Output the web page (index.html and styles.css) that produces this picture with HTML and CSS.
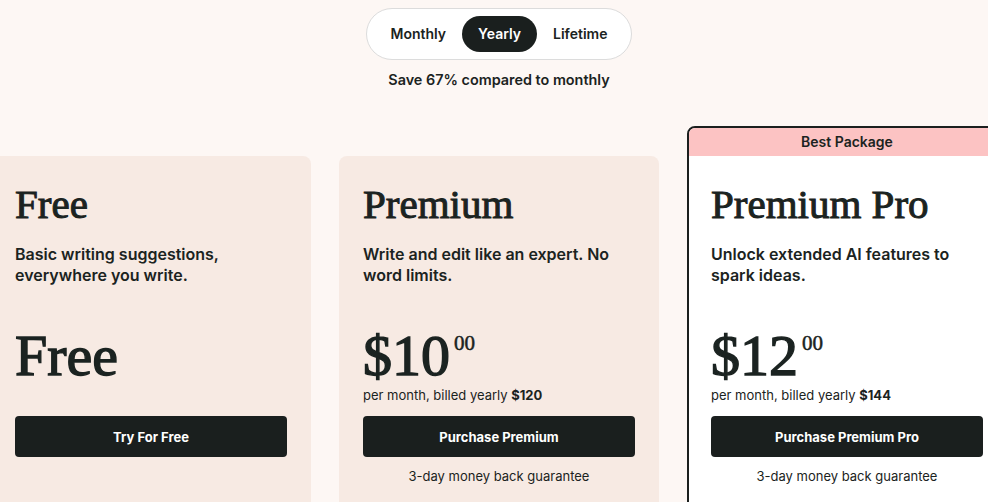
FILE: index.html
```html
<!DOCTYPE html>
<html lang="en">
<head>
  <meta charset="UTF-8">
  <title>Pricing</title>
  <link rel="stylesheet" href="styles.css">
</head>
<body>
  <div class="page">
    <div class="billing">
      <div class="toggle">
        <span class="opt">Monthly</span>
        <span class="opt active">Yearly</span>
        <span class="opt">Lifetime</span>
      </div>
      <p class="save">Save 67% compared to monthly</p>
    </div>

    <div class="plans">
      <div class="card">
        <div class="card-body">
          <h2>Free</h2>
          <p class="desc">Basic writing suggestions, everywhere you write.</p>
          <div class="price-wrap">
            <div class="price">Free</div>
          </div>
          <button class="btn">Try For Free</button>
        </div>
      </div>

      <div class="card">
        <div class="card-body">
          <h2>Premium</h2>
          <p class="desc">Write and edit like an expert. No word limits.</p>
          <div class="price-wrap">
            <div class="price">$10<span class="cents">00</span></div>
            <div class="billed">per month, billed yearly <b>$120</b></div>
          </div>
          <button class="btn">Purchase Premium</button>
          <p class="guarantee">3-day money back guarantee</p>
        </div>
      </div>

      <div class="card featured">
        <div class="badge">Best Package</div>
        <div class="card-body">
          <h2>Premium Pro</h2>
          <p class="desc">Unlock extended AI features to spark ideas.</p>
          <div class="price-wrap">
            <div class="price">$12<span class="cents">00</span></div>
            <div class="billed">per month, billed yearly <b>$144</b></div>
          </div>
          <button class="btn">Purchase Premium Pro</button>
          <p class="guarantee">3-day money back guarantee</p>
        </div>
      </div>
    </div>
  </div>
</body>
</html>
```

FILE: styles.css
```css
* {
  margin: 0;
  padding: 0;
  box-sizing: border-box;
}

body {
  font-family: Inter, "Liberation Sans", sans-serif;
  background: #fdf7f4;
  color: #1b2321;
  overflow: hidden;
  height: 100vh;
}

.page {
  width: 1016px;
  margin-left: -9px;
}

.billing {
  display: flex;
  flex-direction: column;
  align-items: center;
  padding-top: 8px;
}

.toggle {
  display: flex;
  padding: 7px 8px;
  background: #fff;
  border: 1px solid #dcdcdc;
  border-radius: 30px;
}

.opt {
  height: 36px;
  line-height: 36px;
  padding: 0 16px;
  font-size: 14px;
  font-weight: 600;
  border-radius: 18px;
}

.opt.active {
  background: #1a1f1e;
  color: #fff;
}

.save {
  margin-top: 10px;
  font-size: 14.4px;
  font-weight: 600;
  line-height: 19px;
}

.plans {
  display: flex;
  gap: 28px;
  margin-top: 37px;
  align-items: flex-start;
}

.card {
  width: 320px;
  height: 420px;
  margin-top: 30px;
  background: #f7eae3;
  border-radius: 8px;
}

.card-body {
  padding: 24px 24px 0;
}

.card.featured {
  margin-top: 0;
  background: #fff;
  border: 2px solid #1b1f1e;
  overflow: hidden;
}

.featured .card-body {
  padding: 24px 22px 0;
}

.badge {
  height: 28px;
  line-height: 28px;
  background: #fcc3c3;
  text-align: center;
  font-size: 14px;
  font-weight: 600;
}

h2 {
  font-family: "Liberation Serif", serif;
  font-weight: normal;
  font-size: 41px;
  line-height: 48px;
  -webkit-text-stroke: 1px #1b2321;
}

.desc {
  margin-top: 16px;
  font-size: 16px;
  font-weight: 600;
  line-height: 21px;
  height: 42px;
}

.price-wrap {
  height: 130px;
  padding-top: 42px;
}

.price {
  font-family: "Liberation Serif", serif;
  font-size: 58px;
  line-height: 56px;
  height: 56px;
  -webkit-text-stroke: 1.4px #1b2321;
}

.cents {
  display: inline-block;
  vertical-align: top;
  margin-top: 5px;
  margin-left: 4px;
  font-size: 21px;
  line-height: 21px;
  -webkit-text-stroke: 0.5px #1b2321;
}

.billed {
  margin-top: 3px;
  font-size: 13px;
  line-height: 16px;
}

.btn {
  width: 100%;
  height: 41px;
  border: none;
  border-radius: 4px;
  background: #1a1f1e;
  color: #fff;
  font-family: inherit;
  font-size: 13px;
  font-weight: 700;
}

.guarantee {
  margin-top: 9px;
  text-align: center;
  font-size: 13px;
  line-height: 20px;
}
```
